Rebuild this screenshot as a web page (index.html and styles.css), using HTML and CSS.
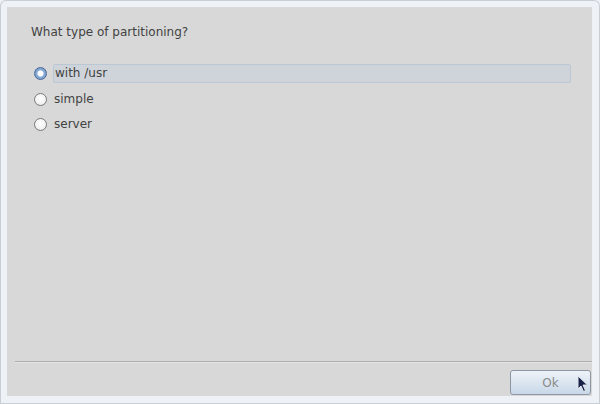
FILE: index.html
```html
<!DOCTYPE html>
<html>
<head>
<meta charset="utf-8">
<link rel="stylesheet" href="styles.css">
</head>
<body>
<div class="frame">
  <div class="dialog">
    <div class="content">
      <div class="question">What type of partitioning?</div>
      <div class="options">
        <div class="option selected">
          <span class="radio on"></span>
          <span class="label">with /usr</span>
        </div>
        <div class="option">
          <span class="radio"></span>
          <span class="label">simple</span>
        </div>
        <div class="option">
          <span class="radio"></span>
          <span class="label">server</span>
        </div>
      </div>
    </div>
    <div class="separator"></div>
    <div class="buttons">
      <button class="btn">Ok
        <svg class="cursor" width="12" height="18" viewBox="0 0 12 18"><path d="M1 1 L1 14 L4 11 L6.5 16.5 L8.5 15.5 L6 10 L10.5 10 Z" fill="#1a2348" stroke="#dfe6ee" stroke-width="1"/></svg>
      </button>
    </div>
  </div>
</div>
</body>
</html>
```
FILE: styles.css
```css
html, body {
  margin: 0;
  padding: 0;
  width: 600px;
  height: 404px;
  overflow: hidden;
  background: #eef2f7;
  font-family: "DejaVu Sans", sans-serif;
}
.frame {
  width: 600px;
  height: 404px;
  box-sizing: border-box;
  padding: 7px 8px 8px 7px;
  background: #eef2f7;
  border-radius: 6px 6px 0 0;
  box-shadow: inset 0 0 0 1px #c9ced6;
}
.dialog {
  width: 100%;
  height: 100%;
  background: #d8d8d8;
  display: flex;
  flex-direction: column;
}
.content {
  flex: 1;
  padding: 18px 21px 0 24px;
}
.question {
  font-size: 12px;
  color: #424242;
  line-height: 14px;
}
.options {
  margin-top: 25px;
  display: flex;
  flex-direction: column;
  gap: 6.5px;
}
.option {
  display: flex;
  align-items: center;
  height: 19px;
  gap: 6px;
  padding-left: 3px;
}
.radio {
  width: 11px;
  height: 11px;
  border-radius: 50%;
  border: 1px solid #7a7a7a;
  background: radial-gradient(circle at 50% 40%, #ffffff 0%, #f2f2f2 60%, #dcdcdc 100%);
  box-sizing: content-box;
  flex: none;
}
.radio.on {
  border-color: #4a6b9a;
  background: radial-gradient(circle, #ffffff 0 2.5px, #8fb0d8 3.5px, #5d84b8 100%);
}
.label {
  font-size: 12px;
  color: #424242;
  line-height: 17px;
  padding-left: 1px;
}
.option.selected .label {
  flex: 1;
  background: #cfd4da;
  border: 1px solid #bac8d5;
  border-radius: 2px;
}
.separator {
  height: 1px;
  background: #adadad;
  margin-left: 8px;
  box-shadow: 0 1px 0 #e4e4e4;
}
.buttons {
  display: flex;
  justify-content: flex-end;
  padding: 8px 1px 1px 0;
  height: 25px;
}
.btn {
  position: relative;
  width: 81px;
  height: 25px;
  border: 1px solid #8d97a3;
  border-radius: 3px;
  background: linear-gradient(#eef3f8, #c8d8e8);
  font-family: "DejaVu Sans", sans-serif;
  font-size: 12px;
  color: #8a8a8a;
  padding: 0;
}
.cursor {
  position: absolute;
  left: 66px;
  top: 4px;
}
```
